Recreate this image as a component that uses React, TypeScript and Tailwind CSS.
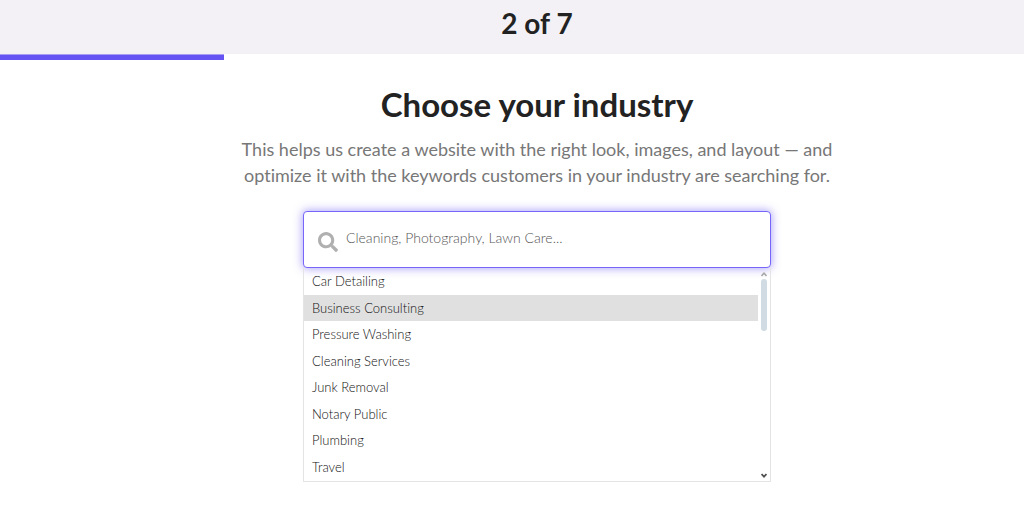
import { useState } from "react";
import { clsx } from "clsx";
import { FaSearch } from "react-icons/fa";

const STEP = 2;
const TOTAL_STEPS = 7;

const industries = [
  "Car Detailing",
  "Business Consulting",
  "Pressure Washing",
  "Cleaning Services",
  "Junk Removal",
  "Notary Public",
  "Plumbing",
  "Travel",
];

function StepHeader() {
  return (
    <header>
      <div className="flex h-[54px] items-center justify-center bg-[#f3f1f6] pb-2 pl-[50px]">
        <p className="text-[28px] leading-9 font-bold">
          {STEP} of {TOTAL_STEPS}
        </p>
      </div>
      <div
        role="progressbar"
        aria-label="Setup progress"
        aria-valuenow={STEP}
        aria-valuemax={TOTAL_STEPS}
        className="h-1.5 w-[21.9%] border-t border-[#a79df2] bg-[#6553f3]"
      />
    </header>
  );
}

function Scrollbar() {
  return (
    <div className="flex w-3 shrink-0 flex-col items-center pt-1 pb-0.5" aria-hidden="true">
      <svg width="6" height="5" viewBox="0 0 6 5" fill="none" stroke="#a8a8a8" strokeWidth="1.6">
        <path d="M0.5 4 3 1.3 5.5 4" />
      </svg>
      <div className="mt-0.5 h-[52px] w-1.5 rounded-full bg-[#d0dbe3]" />
      <svg className="mt-auto" width="6" height="5" viewBox="0 0 6 5" fill="none" stroke="#505050" strokeWidth="1.8">
        <path d="M0.5 1 3 3.6 5.5 1" />
      </svg>
    </div>
  );
}

function IndustryPicker() {
  const [query, setQuery] = useState("");
  const [active, setActive] = useState(1);

  return (
    <div className="mt-[23px] w-full max-w-[468px]">
      <div className="flex h-[57px] items-center rounded border border-[#7667fa] bg-white px-3.5 shadow-[0_0_8px_1px_rgba(101,83,243,0.5)]">
        <FaSearch className="mt-1 size-5 shrink-0 text-[#b0b0b0]" />
        <input
          type="text"
          role="combobox"
          aria-label="Industry"
          aria-expanded="true"
          aria-controls="industry-list"
          placeholder="Cleaning, Photography, Lawn Care..."
          value={query}
          onChange={(e) => setQuery(e.target.value)}
          className="ml-2 h-full min-w-0 flex-1 pb-1 text-[14px] font-light outline-none placeholder:text-[#555]"
        />
      </div>

      <div className="flex border border-t-0 border-[#e4e4e4] pb-px">
        <ul id="industry-list" role="listbox" aria-label="Industries" className="grid h-[212px] flex-1 auto-rows-fr">
          {industries.map((name, i) => (
            <li
              key={name}
              role="option"
              aria-selected={i === active}
              onMouseEnter={() => setActive(i)}
              className={clsx(
                "flex cursor-pointer items-center px-2 text-[13px] leading-5 font-light text-[#111]",
                i === active && "bg-[#e0e0e0]"
              )}
            >
              {name}
            </li>
          ))}
        </ul>
        <Scrollbar />
      </div>
    </div>
  );
}

export default function App() {
  return (
    <div className="min-h-screen bg-white font-['Lato',sans-serif] text-[#222] [font-variant-ligatures:no-common-ligatures]">
      <StepHeader />
      <main className="flex flex-col items-center pt-6 pl-[50px]">
        <h1 className="text-[33px] leading-10 font-bold">Choose your industry</h1>
        <p className="mt-3 max-w-[620px] text-center text-[18px] leading-[26px] text-[#777]">
          This helps us create a website with the right look, images, and layout — and
          <br />
          optimize it with the keywords customers in your industry are searching for.
        </p>
        <IndustryPicker />
      </main>
    </div>
  );
}
